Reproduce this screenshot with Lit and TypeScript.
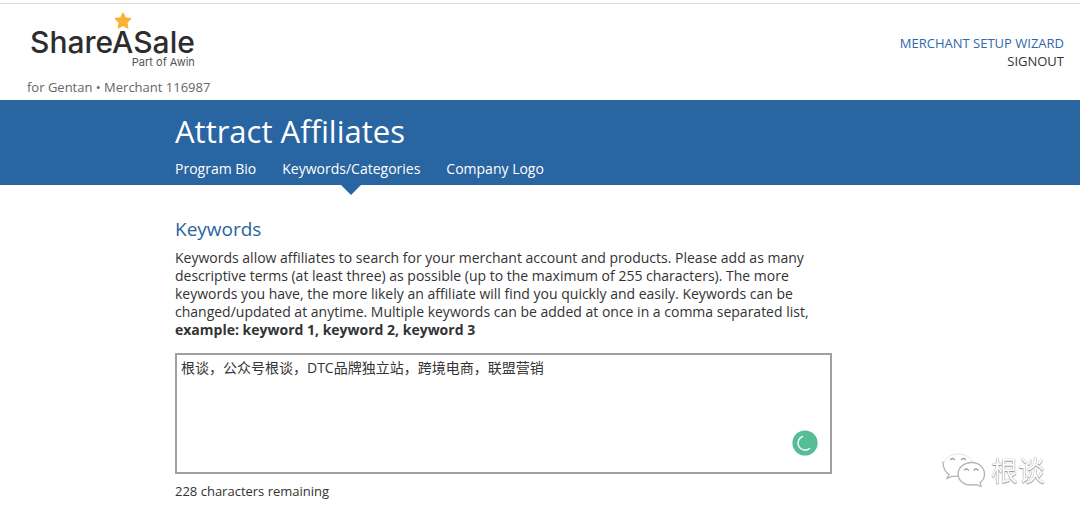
import { LitElement, html, css } from "lit";
import { customElement, property, state } from "lit/decorators.js";
import { classMap } from "lit/directives/class-map.js";

@customElement("site-header")
class SiteHeader extends LitElement {
  @property() merchant = "";

  static styles = css`
    :host {
      display: block;
      border-top: 1px solid #dcdcdc;
    }
    .bar {
      display: flex;
      justify-content: space-between;
      align-items: flex-start;
      padding: 8px 16px 4px 27px;
    }
    .logo {
      display: grid;
      width: max-content;
      margin-left: 3px;
      color: #2d2d2f;
      text-decoration: none;
    }
    .star {
      display: block;
      width: 18px;
      height: 18px;
      margin-left: 84px;
    }
    .name {
      font: 500 30px/24px "Inter", sans-serif;
    }
    .tag {
      justify-self: end;
      color: #555;
      font: 11px/16px "Inter", sans-serif;
    }
    .merchant {
      margin: 8px 0 0;
      color: #666;
      font-size: 13px;
      line-height: 18px;
    }
    .links {
      display: grid;
      justify-items: end;
      margin-top: 22px;
      font-size: 13px;
      line-height: 18px;
    }
    .links a {
      color: #333;
      text-decoration: none;
    }
    .links .wizard {
      color: #2f68ab;
    }
  `;

  render() {
    return html`
      <header class="bar">
        <div>
          <a class="logo" href="#home">
            <svg class="star" viewBox="0 0 18 18" aria-hidden="true">
              <path
                d="M9 1.2 L11.3 6 L16.6 6.8 L12.7 10.5 L13.7 15.8 L9 13.2 L4.3 15.8 L5.3 10.5 L1.4 6.8 L6.7 6 Z"
                fill="#f9b233"
                stroke="#f9b233"
                stroke-width="1.4"
                stroke-linejoin="round"
              />
            </svg>
            <span class="name">ShareASale</span>
            <span class="tag">Part of Awin</span>
          </a>
          <p class="merchant">${this.merchant}</p>
        </div>
        <nav class="links">
          <a class="wizard" href="#wizard">MERCHANT SETUP WIZARD</a>
          <a href="#signout">SIGNOUT</a>
        </nav>
      </header>
    `;
  }
}

@customElement("section-banner")
class SectionBanner extends LitElement {
  @property() heading = "";
  @property({ attribute: false }) tabs: string[] = [];
  @property() current = "";

  static styles = css`
    :host {
      display: block;
      background: #2965a1;
      color: #fff;
    }
    .inner {
      max-width: 730px;
      margin: 0 auto;
    }
    h1 {
      margin: 0;
      padding-top: 10px;
      font-size: 31px;
      font-weight: 400;
      line-height: 42px;
    }
    .tabs {
      display: flex;
      gap: 26px;
    }
    .tab {
      position: relative;
      padding: 7px 0;
      color: #fff;
      font-size: 14px;
      line-height: 19px;
      text-decoration: none;
    }
    .current::after {
      content: "";
      position: absolute;
      top: 100%;
      left: 50%;
      margin-left: -10px;
      border: 10px solid transparent;
      border-top-color: #2965a1;
      border-bottom: 0;
    }
  `;

  render() {
    return html`
      <div class="inner">
        <h1>${this.heading}</h1>
        <nav class="tabs">
          ${this.tabs.map(
            (t) => html`<a class=${classMap({ tab: true, current: t === this.current })} href="#tab">${t}</a>`
          )}
        </nav>
      </div>
    `;
  }
}

@customElement("keyword-form")
class KeywordForm extends LitElement {
  @state() remaining = 228;

  static styles = css`
    :host {
      display: block;
      max-width: 730px;
      margin: 0 auto;
      padding-top: 30px;
      color: #333;
      font-size: 13px;
      line-height: 18px;
    }
    .form {
      width: 90%;
    }
    h2 {
      margin: 0 0 6px;
      color: #2965a1;
      font-size: 19px;
      font-weight: 400;
      line-height: 28px;
    }
    .intro {
      display: block;
      font-size: 14px;
    }
    .field {
      position: relative;
      margin: 14px 0 8px;
    }
    textarea {
      display: block;
      box-sizing: border-box;
      width: 100%;
      height: 121px;
      padding: 4px;
      border: 2px solid #a0a0a0;
      background: #fff;
      color: #333;
      font: 14px/18px "Open Sans", "Noto Sans CJK SC", sans-serif;
      resize: none;
      outline: none;
    }
    .checker {
      position: absolute;
      right: 14px;
      bottom: 18px;
      width: 26px;
      height: 26px;
    }
    .count {
      margin: 0;
    }
  `;

  render() {
    return html`
      <form class="form">
        <h2>Keywords</h2>
        <label class="intro" for="keywords">
          Keywords allow affiliates to search for your merchant account and products. Please add as many
          descriptive terms (at least three) as possible (up to the maximum of 255 characters). The more
          keywords you have, the more likely an affiliate will find you quickly and easily. Keywords can be
          changed/updated at anytime. Multiple keywords can be added at once in a comma separated list,
          <b>example: keyword 1, keyword 2, keyword 3</b>
        </label>
        <div class="field">
          <textarea id="keywords" spellcheck="false" .value=${"根谈，公众号根谈，DTC品牌独立站，跨境电商，联盟营销"}></textarea>
          <svg class="checker" viewBox="0 0 26 26" aria-hidden="true">
            <circle cx="13" cy="13" r="12.6" fill="#55bd97" />
            <path d="M10.5 6.6 A7 7 0 1 0 17.4 18.6" fill="none" stroke="#e6f7ef" stroke-width="1.6" stroke-linecap="round" />
          </svg>
        </div>
        <p class="count">${this.remaining} characters remaining</p>
      </form>
    `;
  }
}

@customElement("page-watermark")
class PageWatermark extends LitElement {
  static styles = css`
    :host {
      position: fixed;
      right: 35px;
      bottom: 30px;
      display: flex;
      align-items: center;
      gap: 5px;
      color: #fff;
    }
    .bubbles {
      width: 45px;
      height: 36px;
    }
    .name {
      color: #fff;
      font: 27px/36px "Noto Sans CJK SC", sans-serif;
      text-shadow: 0 0 1px #777, 0 1px 1px #999;
    }
  `;

  render() {
    return html`
      <svg class="bubbles" viewBox="0 0 45 36" fill="none" stroke-linecap="round" aria-hidden="true">
        <path d="M17 2 C8 2 2 8 2 14.500" stroke="#e8e8e8" />
        <path d="M2 10 C2 17 4.500 20 8 22.500 L6 26.500 L11 24.300 L17 24.300" stroke="#b4b4b4" stroke-width="1.3" />
        <path d="M17 2 C25 2 30 6 31.500 10" stroke="#e0e0e0" />
        <path d="M31 10.500 C22.500 10.500 17 16 17 22 C17 28.500 23 33 30 33 L35.500 32.600 L40 34.500 L39 30.800 C42 28.500 43.500 25.500 43.500 22 C43.500 16 38 10.500 31 10.500 Z" fill="#fff" stroke="#b4b4b4" stroke-width="1.3" />
        <path d="M9.500 7.500 q2 -2 4 0 M20.500 7.500 q2 -2 4 0 M23.500 18 q2 -2 4 0 M33 18 q2 -2 4 0" stroke="#a0a0a0" stroke-width="1.3" />
      </svg>
      <span class="name">根谈</span>
    `;
  }
}

@customElement("app-root")
class AppRoot extends LitElement {
  static styles = css`
    :host {
      display: block;
      min-height: 100vh;
      box-sizing: border-box;
      padding-top: 3px;
      background: #fff;
      font-family: "Open Sans", "Noto Sans CJK SC", sans-serif;
    }
  `;

  render() {
    return html`
      <site-header merchant="for Gentan • Merchant 116987"></site-header>
      <section-banner
        heading="Attract Affiliates"
        .tabs=${["Program Bio", "Keywords/Categories", "Company Logo"]}
        current="Keywords/Categories"
      ></section-banner>
      <main><keyword-form></keyword-form></main>
      <page-watermark></page-watermark>
    `;
  }
}
